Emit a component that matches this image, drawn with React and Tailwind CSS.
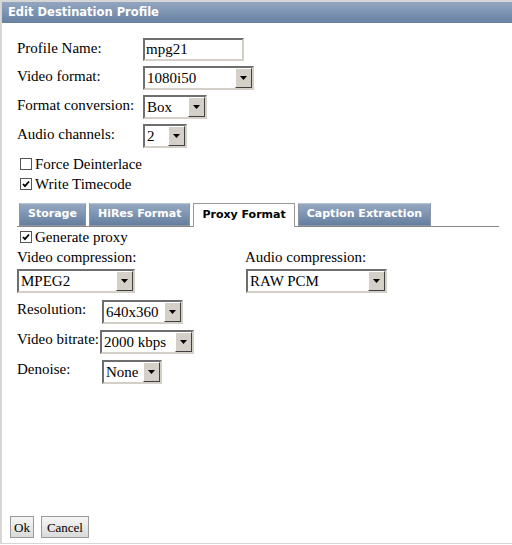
const serif = { fontFamily: '"Liberation Serif", "Times New Roman", serif' };

function Select({ value, width }) {
  return (
    <div
      className="flex h-[24px] items-stretch border-2 border-t-[#6e6e6e] border-l-[#6e6e6e] border-b-[#d4d0c8] border-r-[#d4d0c8] bg-white"
      style={{ width }}
    >
      <div className="flex flex-1 items-center pl-[2px] text-[15px] leading-none text-black">{value}</div>
      <div className="flex w-[17px] items-center justify-center border border-t-white border-l-white border-b-[#404040] border-r-[#404040] bg-[#d4d0c8]">
        <svg width="7" height="4" viewBox="0 0 7 4">
          <path d="M0 0H7L3.5 4Z" fill="#000" />
        </svg>
      </div>
    </div>
  );
}

function Check({ checked, label }) {
  return (
    <div className="flex items-center gap-[3px] text-[15px] leading-[20px]">
      <div className="flex h-[12px] w-[12px] items-center justify-center border border-[#555] bg-white">
        {checked && (
          <svg width="8" height="8" viewBox="0 0 8 8">
            <path d="M1 4L3 6.2L7 1.5" stroke="#000" strokeWidth="1.8" fill="none" />
          </svg>
        )}
      </div>
      <span>{label}</span>
    </div>
  );
}

function Tab({ label, active }) {
  return active ? (
    <div className="-mb-px flex h-[24px] items-center border border-b-0 border-[#999] bg-white px-[8px] text-[11px] font-bold text-black">
      {label}
    </div>
  ) : (
    <div className="flex h-[23px] items-center border border-[#8b97a8] border-t-[#b9c4d3] bg-gradient-to-b from-[#95a8c2] to-[#667f9f] px-[8px] text-[11px] font-bold text-white">
      {label}
    </div>
  );
}

function Row({ label, children }) {
  return (
    <div className="flex items-start">
      <div className="w-[126px] pt-[1px] text-[15px] leading-[18px]">{label}</div>
      {children}
    </div>
  );
}

export default function App() {
  return (
    <div className="h-[545px] w-[512px] overflow-hidden bg-white">
      <div className="flex h-[544px] flex-col border-t-2 border-l-2 border-b border-[#d6d6d6]">
        {/* Title */}
        <div
          className="flex h-[21px] items-center bg-gradient-to-b from-[#93a6c0] to-[#6781a2] pl-[6px] text-[11.5px] font-bold text-white"
          style={{ fontFamily: '"DejaVu Sans", Verdana, sans-serif' }}
        >
          Edit Destination Profile
        </div>

        <div className="flex flex-1 flex-col pl-[15px] text-black" style={serif}>
          <div className="mt-[15px] flex flex-col gap-[5px]">
            <Row label="Profile Name:">
              <div className="flex h-[23px] w-[101px] items-center border-2 border-t-[#6e6e6e] border-l-[#6e6e6e] border-b-[#d4d0c8] border-r-[#d4d0c8] pl-[1px] text-[15px]">
                mpg21
              </div>
            </Row>
            <Row label="Video format:">
              <Select value="1080i50" width={111} />
            </Row>
            <Row label="Format conversion:">
              <Select value="Box" width={64} />
            </Row>
            <Row label="Audio channels:">
              <Select value="2" width={44} />
            </Row>
          </div>

          <div className="ml-[3px] mt-[6px] flex flex-col">
            <Check label="Force Deinterlace" />
            <Check checked label="Write Timecode" />
          </div>

          {/* Tabs */}
          <div
            className="mt-[9px] mr-[13px] flex items-end gap-[3px] border-b border-[#888] pl-[2px]"
            style={{ fontFamily: '"DejaVu Sans", Verdana, sans-serif' }}
          >
            <Tab label="Storage" />
            <Tab label="HiRes Format" />
            <Tab active label="Proxy Format" />
            <Tab label="Caption Extraction" />
          </div>

          <div className="ml-[3px]">
            <Check checked label="Generate proxy" />
          </div>

          <div className="mt-[1px] flex">
            <div className="flex w-[228px] flex-col gap-[3px]">
              <div className="text-[15px] leading-[18px]">Video compression:</div>
              <Select value="MPEG2" width={118} />
            </div>
            <div className="flex flex-col gap-[3px]">
              <div className="text-[15px] leading-[18px]">Audio compression:</div>
              <div className="ml-[1px]">
                <Select value="RAW PCM" width={141} />
              </div>
            </div>
          </div>

          <div className="mt-[7px] flex flex-col gap-[6px]">
            <div className="flex items-start">
              <div className="w-[85px] text-[15px] leading-[18px]">Resolution:</div>
              <Select value="640x360" width={81} />
            </div>
            <div className="flex items-start">
              <div className="w-[83px] text-[15px] leading-[18px]">Video bitrate:</div>
              <Select value="2000 kbps" width={94} />
            </div>
            <div className="flex items-start">
              <div className="w-[85px] text-[15px] leading-[18px]">Denoise:</div>
              <Select value="None" width={60} />
            </div>
          </div>

          <div className="mt-auto mb-[5px] -ml-[7px] flex gap-[7px]">
            <button className="h-[22px] border border-[#9a9a9a] bg-gradient-to-b from-[#f6f6f6] to-[#dadada] px-[3px] text-[13px] leading-none">
              Ok
            </button>
            <button className="h-[22px] border border-[#9a9a9a] bg-gradient-to-b from-[#f6f6f6] to-[#dadada] px-[5px] text-[13px] leading-none">
              Cancel
            </button>
          </div>
        </div>
      </div>
    </div>
  );
}
